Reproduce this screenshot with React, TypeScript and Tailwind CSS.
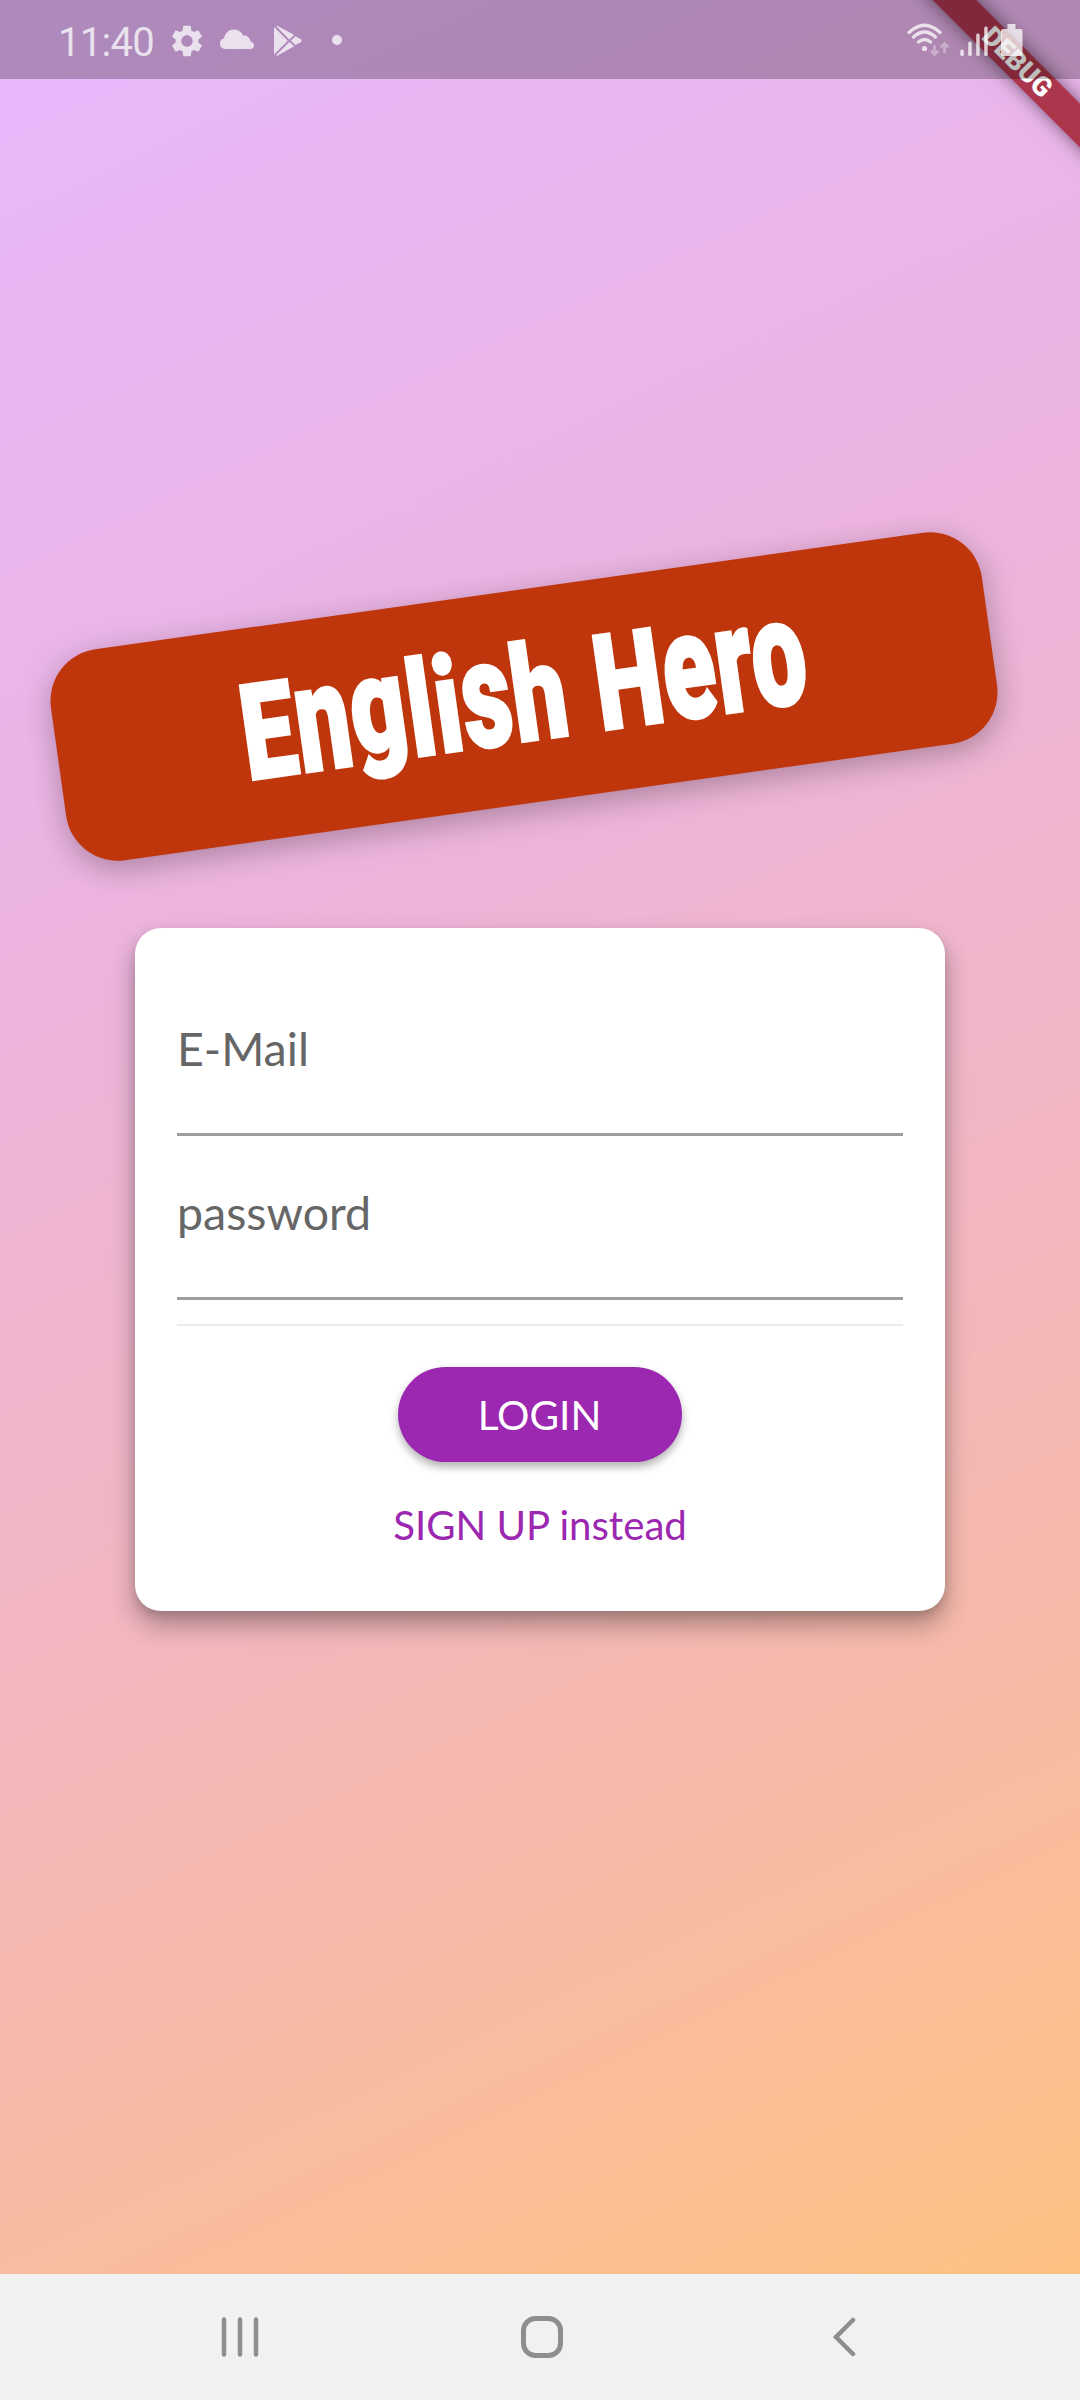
import React from "react";

const stroke = { fill: "none", stroke: "currentColor", strokeLinecap: "round" as const };

function StatusBar() {
  return (
    <header className="relative flex h-[79px] items-start bg-black/25 text-white/75">
      <span className="ml-[58px] mt-[19px] w-[97px] whitespace-nowrap font-[Roboto,sans-serif] text-[40px] leading-[47px] tracking-[-0.7px]">11:40</span>
      <svg className="ml-[13px] mt-[22px] size-[38px]" viewBox="0 0 24 24" fill="currentColor">
        <path d="M19.14 12.94c.04-.3.06-.61.06-.94 0-.32-.02-.64-.07-.94l2.03-1.58c.18-.14.23-.41.12-.61l-1.92-3.32c-.12-.22-.37-.29-.59-.22l-2.39.96c-.5-.38-1.03-.7-1.62-.94l-.36-2.54c-.04-.24-.24-.41-.48-.41h-3.84c-.24 0-.43.17-.47.41l-.36 2.54c-.59.24-1.13.57-1.62.94l-2.39-.96c-.22-.08-.47 0-.59.22L2.74 8.87c-.12.21-.08.47.12.61l2.03 1.58c-.05.3-.09.63-.09.94s.02.64.07.94l-2.03 1.58c-.18.14-.23.41-.12.61l1.92 3.32c.12.22.37.29.59.22l2.39-.96c.5.38 1.03.7 1.62.94l.36 2.54c.05.24.24.41.48.41h3.84c.24 0 .44-.17.47-.41l.36-2.54c.59-.24 1.13-.56 1.62-.94l2.39.96c.22.08.47 0 .59-.22l1.92-3.32c.12-.22.07-.47-.12-.61l-2.01-1.58zM12 15.6c-1.98 0-3.6-1.62-3.6-3.6s1.62-3.6 3.6-3.6 3.6 1.62 3.6 3.6-1.62 3.6-3.6 3.6z" />
      </svg>
      <svg className="ml-[14px] mt-[29px] h-5 w-[34px]" viewBox="0 0 34 20" fill="currentColor">
        <path d="M5 20a5 5 0 0 1-5-5.500A5 5 0 0 1 4 9.500C5 4 9 .6 14 .6c4.500 0 7.500 2.400 9 6 4-.5 7 2 7.500 6 2 .4 3.500 2 3.500 4 0 2-1.500 3.400-3.500 3.400Z" />
      </svg>
      <svg className="ml-5 mt-[25px] h-8 w-7" viewBox="0 0 28 32" fill="currentColor">
        <path d="M0 2 13.800 15.700 0 29.500ZM1.800.8 3.300.8 20.200 9.900 15.300 14.500ZM16.800 15.700 21.500 11.200 26.800 14.200Q28.500 15.700 26.800 17.200L21.500 20ZM15.300 17 20.200 21.300 3.300 30.800 1.800 30.500Z" />
      </svg>
      <span className="ml-[30px] mt-[35px] size-[10px] rounded-full bg-current" />
      <svg className="ml-auto mr-[57px] mt-[23px] h-[34px] w-[116px]" viewBox="0 0 116 34">
        <g {...stroke} strokeWidth="3.200">
          <path d="M2 9.500Q17.500-5 33 9.500M6.500 14Q17.500 4 28.500 14M11.500 19Q17.500 14 23.500 19" />
        </g>
        <circle cx="17.500" cy="25.500" r="2.600" fill="currentColor" />
        <g {...stroke} strokeWidth="2.600" opacity=".45">
          <path d="M27.500 23v8M24.500 28.500l3 3 3-3M37.500 29v-8M34.500 23.500l3-3 3 3" />
        </g>
        <g fill="currentColor">
          <rect x="53.300" y="26.500" width="3.500" height="6.500" rx="1.500" />
          <rect x="61.200" y="18.500" width="3.500" height="14.500" rx="1.500" />
          <rect x="69.200" y="10.500" width="3.500" height="22.500" rx="1.500" />
          <rect x="77.200" y="3.500" width="3.500" height="29.500" rx="1.500" />
          <path d="M100.500 1h8v5h5q2 0 2 2v23q0 2-2 2H96q-2 0-2-2V8q0-2 2-2h4.500Z" />
        </g>
      </svg>
    </header>
  );
}

function DebugRibbon() {
  return (
    <div className="absolute right-0 top-0 size-[200px] overflow-hidden">
      <div className="absolute left-[-23px] top-[47px] flex h-[31px] w-[320px] rotate-45 items-center justify-center bg-[#9c1825]/80 shadow-[0_0_18px_rgba(0,0,0,0.5)]">
        <span className="font-[Roboto,sans-serif] text-[27px] font-black leading-none text-white">DEBUG</span>
      </div>
    </div>
  );
}

// Lowercase letters are stretched from the baseline for a tall, poster-like x-height.
const tall = "inline-block origin-[50%_84%] scale-y-[1.13]";

function Title() {
  return (
    <h1 className="relative -top-px origin-center scale-x-[.725] whitespace-nowrap font-[Roboto,sans-serif] text-[133px] font-black leading-none tracking-[1.5px] text-white [-webkit-text-stroke:3px_white] [word-spacing:4px]">
      E<span className={tall}>n</span>
      <span className="inline-block -translate-y-[11px]">g</span>li
      <span className={tall}>s</span>h H<span className={tall}>ero</span>
    </h1>
  );
}

function Field({ label }: { label: string }) {
  return (
    <label className="flex h-[164px] items-center border-b-[3px] border-[#9e9e9e] pb-[9px] text-[46.5px] leading-none text-[#666]">
      {label}
    </label>
  );
}

export default function App() {
  return (
    <main className="relative flex h-[2400px] w-[1080px] flex-col overflow-hidden font-[Lato,sans-serif]">
      <div className="relative h-[2274px] bg-[linear-gradient(154.6deg,#e9b8fd_0%,#e9b5f2_12.5%,#ebb5e8_25%,#edb4db_37.5%,#f0b6cd_50%,#f3b7bd_62.5%,#f6baab_75%,#fabe97_87.5%,#ffc282_100%)]">
        <DebugRibbon />
        <StatusBar />
        <div className="ml-[54px] mt-[511px] flex h-[213px] w-[940px] -rotate-8 items-center justify-center rounded-[52px] bg-[#bf360c] shadow-[0_8px_30px_rgba(0,0,0,0.28)]">
          <Title />
        </div>
        <section className="mx-auto mt-[125px] flex h-[683px] w-[810px] flex-col rounded-[26px] bg-white px-[42px] pt-[44px] shadow-[0_14px_26px_rgba(0,0,0,0.3),0_4px_10px_rgba(0,0,0,0.12)]">
          <Field label="E-Mail" />
          <Field label="password" />
          <hr className="mt-6 h-[2px] border-0 bg-[#ececec]" />
          <button className="mx-auto mt-[41px] h-[95px] w-[284px] shrink-0 rounded-full bg-[#9c27b0] pr-px pt-px text-[40.500px] text-white shadow-[0_5px_8px_rgba(0,0,0,0.3)]">LOGIN</button>
          <button className="mx-auto mt-[38px] whitespace-nowrap text-[40.200px] leading-[50px] text-[#9c27b0]">SIGN UP instead</button>
        </section>
      </div>
      <nav className="flex h-[126px] bg-[#f1f1f1] text-[#8e8e8e]">
        <svg className="ml-[221px] mt-[43px] h-10 w-[38px]" viewBox="0 0 38 40" {...stroke} strokeWidth="4.500">
          <path d="M3 2.500v35M19 2.500v35M35 2.500v35" />
        </svg>
        <svg className="ml-[262px] mt-[42px] h-[42px] w-[42px]" viewBox="0 0 42 42" {...stroke} strokeWidth="5">
          <rect x="2.500" y="2.500" width="37" height="37" rx="12" />
        </svg>
        <svg className="ml-[269px] mt-[43px] h-10 w-6" viewBox="0 0 24 40" {...stroke} strokeWidth="4.500">
          <path d="M21 3 4 20 21 37" strokeLinejoin="miter" />
        </svg>
      </nav>
    </main>
  );
}
